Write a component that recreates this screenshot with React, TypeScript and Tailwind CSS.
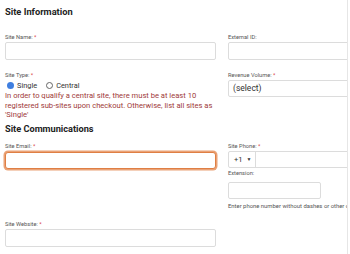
function Label({ text, req }: { text: string; req?: boolean }) {
  return (
    <div className="h-[7px] whitespace-nowrap text-[5.7px] leading-[7px] text-[#555]">
      {text}
      {req && <span className="text-[#d9443f]"> *</span>}
    </div>
  );
}

const box = "w-full rounded-[2px] border border-[#dcdcdc] bg-white";

export default function App() {
  return (
    <div className="h-[254px] w-[350px] bg-white font-['Roboto',sans-serif]">
      <div className="h-full w-[348px] overflow-hidden border-r border-[#e6e6e6] pl-[5px]">
        <h2 className="pt-[6px] text-[9.3px] font-bold leading-[12px] text-[#222]">
          Site Information
        </h2>

        <div className="mt-[16px] grid grid-cols-[211px_211px] gap-x-[12px]">
          <div>
            <Label text="Site Name:" req />
            <div className={`mt-[1px] h-[18px] ${box}`} />
          </div>
          <div>
            <Label text="External ID:" />
            <div className={`mt-[1px] h-[18px] ${box}`} />
          </div>
        </div>

        <div className="mt-[12px] grid grid-cols-[211px_211px] gap-x-[12px]">
          <div>
            <Label text="Site Type:" req />
            <div className="mt-[2px] flex h-[9px] items-center text-[7.4px] text-[#333]">
              <span className="ml-[2px] h-[7px] w-[7px] rounded-full bg-[#3f7fe0]" />
              <span className="ml-[3px]">Single</span>
              <span className="ml-[9px] h-[7px] w-[7px] rounded-full border border-[#666]" />
              <span className="ml-[3px]">Central</span>
            </div>
            <p className="mt-[1px] text-[7.6px] leading-[9.6px] text-[#a03a3a]">
              In order to qualify a central site, there must be at least 10
              <br />
              registered sub-sites upon checkout. Otherwise, list all sites as
              <br />
              'Single'
            </p>
          </div>
          <div>
            <Label text="Revenue Volume:" req />
            <div className={`mt-[1px] flex h-[17px] items-center pl-[4px] text-[8.5px] text-[#333] ${box}`}>
              (select)
            </div>
          </div>
        </div>

        <h2 className="mt-[3px] text-[9.2px] font-bold leading-[12px] text-[#222]">
          Site Communications
        </h2>

        <div className="mt-[8.5px] grid grid-cols-[211px_211px] gap-x-[12px]">
          <div>
            <Label text="Site Email:" req />
            <div className="mt-[2px] h-[17px] w-full rounded-[3px] border border-[#df7f44] bg-white ring-[1.5px] ring-[#eaa276]" />
          </div>
          <div>
            <Label text="Site Phone:" req />
            <div className={`mt-[1px] flex h-[17px] items-center ${box}`}>
              <div className="flex h-full w-[27px] items-center border-r border-[#dcdcdc] pl-[5px] text-[7.5px] text-[#333]">
                +1
                <span className="ml-[4px] text-[5px]">▼</span>
              </div>
            </div>
            <div className="mt-[1.5px]">
              <Label text="Extension:" />
            </div>
            <div className="mt-[5px] h-[17px] w-[93px] rounded-[2px] border border-[#dcdcdc] bg-white" />
            <div className="mt-[4px] whitespace-nowrap text-[5.9px] leading-[7px] text-[#555]">
              Enter phone number without dashes or other characters
            </div>
          </div>
        </div>

        <div className="mt-[11px] grid grid-cols-[211px_211px] gap-x-[12px]">
          <div>
            <Label text="Site Website:" req />
            <div className={`mt-[1.5px] h-[17.5px] ${box}`} />
          </div>
        </div>
      </div>
    </div>
  );
}
